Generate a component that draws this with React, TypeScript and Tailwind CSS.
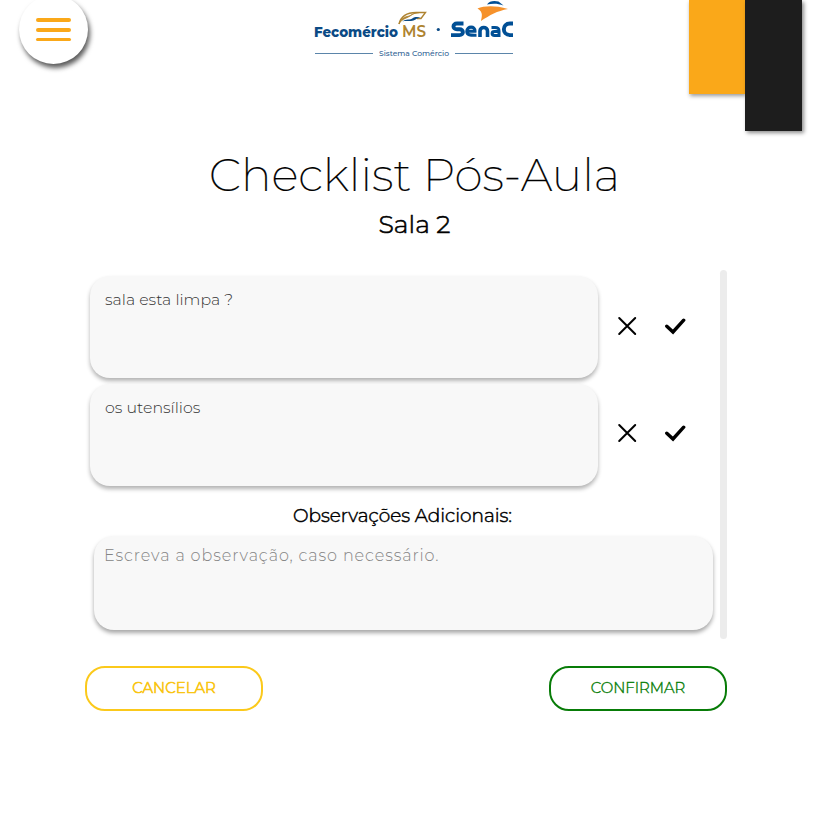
import React from "react";

function Logo() {
  return (
    <svg className="block" width="200" height="60" viewBox="314 0 200 60">
      <g fontFamily="Montserrat, 'Open Sans', sans-serif">
        <text x="314" y="36.800" fontSize="14.600" fontWeight="800" fill="#0b4a85" textLength="84" lengthAdjust="spacingAndGlyphs">Fecomércio</text>
        <text x="402" y="36.800" fontSize="15.500" fontWeight="600" fill="#ae8330" textLength="24" lengthAdjust="spacingAndGlyphs">MS</text>
        <text x="379" y="56" fontSize="8" fontWeight="500" fill="#2f5f94" textLength="70" lengthAdjust="spacingAndGlyphs">Sistema Comércio</text>
      </g>
      <path d="M399 24C401 16 408 12.500 416 12.500H425.500L421 18.500H417" fill="none" stroke="#ae8330" strokeWidth="1.400" />
      <path d="M399 24C402 18 408 18.500 412 14.500C414 13 418 12.800 419 12.600C413 13 411 16 407 16.500C402 17.500 400 21 399 24Z" fill="#ae8330" stroke="#ae8330" strokeWidth=".8" />
      <path d="M402.500 21.500C406 18.500 410 20.500 413 18C415 16.500 418 17 421 17.500C416 18 415 21 411 21C407 21.300 405 20.500 402.500 21.500Z" fill="#0b4a85" />
      <circle cx="438.300" cy="29.500" r="1.600" fill="#0b4a85" />
      <g fill="none" stroke="#004f95" strokeWidth="3.900">
        <path d="M463.500 23.500H457C452.300 23.500 452.300 29.300 457 29.300H459.500C464 29.300 464 35.100 459.500 35.100H451" />
        <path d="M466.800 31.200H475C475.500 25.700 466.800 25.700 466.800 31.200C466.800 35 470 35.400 476.500 35.200" strokeWidth="3.100" />
        <path d="M480 37V31C480 26.300 487.500 26.300 487.500 31V37" strokeWidth="3.600" />
        <path d="M491.500 27.600H495C498.500 27.600 499 29 499 31V35.400H494.500C491.300 35.400 491.300 31.500 494.500 31.500H499" strokeWidth="3" />
        <path d="M513 23.500H510C501.800 23.500 501.800 35.100 510 35.100H513" />
      </g>
      <path d="M477.500 8.500C484 6 494 5 508 9C497 11 490 15 481 21C481.500 17 484 12.500 477.500 8.500Z" fill="#f6922b" />
      <path d="M487 4.500C489 1 494 .2 498.500 1.500L503.500 5.500C498 3.500 493 3.500 487 4.500Z" fill="#004f95" />
      <path d="M315 53.500H373M455 53.500H513" stroke="#5b85aa" strokeWidth="1" />
    </svg>
  );
}

function ChecklistItem({ text, iconClass }: { text: string; iconClass: string }) {
  return (
    <div className="flex h-[102.5px] items-center">
      <div className="h-full w-[508px] shrink-0 rounded-[20px] bg-[#f8f8f8] px-[15px] pt-[12px] text-[15.8px] leading-6 font-light text-[#333] shadow-[0_3px_4px_rgba(0,0,0,0.3)]">
        {text}
      </div>
      <div className={`flex items-center ${iconClass}`}>
        <button aria-label="Não" className="ml-[19px] h-5 w-5">
          <svg width="20" height="20" viewBox="0 0 20 20" fill="none" stroke="#000" strokeWidth="2" strokeLinecap="round">
            <path d="M2.200 2L18.200 18M18.200 2L2.200 18" />
          </svg>
        </button>
        <button aria-label="Sim" className="ml-[27px] h-5 w-[22px]">
          <svg width="22" height="20" viewBox="0 0 22 20" fill="none" stroke="#000" strokeWidth="3.400" strokeLinecap="round" strokeLinejoin="miter">
            <path d="M2.800 10.200L9 16L19.700 4.200" />
          </svg>
        </button>
      </div>
    </div>
  );
}

export default function App() {
  return (
    <div className="h-[838px] w-[829px] overflow-hidden bg-white font-['Montserrat',Inter,sans-serif] text-black">
      <header className="flex h-[131px] items-start pl-[19px]">
        <button aria-label="Menu" className="-mt-[5px] flex h-[69px] w-[69px] shrink-0 flex-col items-center gap-[6px] rounded-full bg-white pt-[23px] shadow-[2px_4px_5px_rgba(0,0,0,0.65)]">
          <span className="h-1 w-[35px] rounded-full bg-[#faa819]" />
          <span className="h-1 w-[35px] rounded-full bg-[#faa819]" />
          <span className="h-[3px] w-[35px] rounded-full bg-[#faa819]" />
        </button>
        <div className="ml-[226px] w-[200px] shrink-0"><Logo /></div>
        <div className="ml-[175px] h-[94px] w-14 shrink-0 bg-[#faa819] shadow-[1px_2px_4px_rgba(0,0,0,0.4)]" />
        <div className="relative h-[131px] w-[57px] shrink-0 bg-[#1d1d1d] shadow-[2px_2px_4px_rgba(0,0,0,0.45)]" />
      </header>

      <main>
        <h1 className="pt-[14px] text-center text-[45.5px] leading-[60px] font-extralight whitespace-nowrap [-webkit-text-stroke:0.2px_black]">Checklist Pós-Aula</h1>
        <h2 className="h-[65px] pt-[2px] text-center text-[25.2px] leading-[34px] font-light [-webkit-text-stroke:0.6px_black]">Sala 2</h2>

        <section className="ml-[85px] flex h-[369px] w-[642px] justify-between">
          <div className="w-[635px] pt-[5.5px] pl-[5px]">
            <div className="flex flex-col gap-[5.5px]">
              <ChecklistItem text="sala esta limpa ?" iconClass="mb-[2px]" />
              <ChecklistItem text="os utensílios" iconClass="mb-[4px]" />
            </div>
            <h3 className="mt-[14px] h-9 w-[625px] text-center text-[18.5px] leading-[31px] font-light [-webkit-text-stroke:0.5px_black]">Observações Adicionais:</h3>
            <textarea
              className="ml-1 block h-[94px] w-[619px] resize-none rounded-[20px] bg-[#f8f8f8] px-[10px] py-[8px] text-[16px] leading-6 font-light tracking-[0.9px] shadow-[0_3px_4px_rgba(0,0,0,0.35)] outline-none placeholder:text-[#858585]"
              placeholder="Escreva a observação, caso necessário."
            />
          </div>
          <div className="w-[7px] rounded-full bg-[#ececec]" />
        </section>

        <div className="mt-[27px] ml-[85px] flex w-[642px] justify-between">
          <button className="h-[45px] w-[178px] rounded-[20px] border-2 border-[#fbc91b] text-[14.9px] font-light text-[#f9c514] [-webkit-text-stroke:0.7px_#f9c514]">CANCELAR</button>
          <button className="h-[45px] w-[178px] rounded-[20px] border-2 border-[#087c08] text-[14.9px] font-light text-[#0b800b] [-webkit-text-stroke:0.4px_#0b800b]">CONFIRMAR</button>
        </div>
      </main>
    </div>
  );
}
